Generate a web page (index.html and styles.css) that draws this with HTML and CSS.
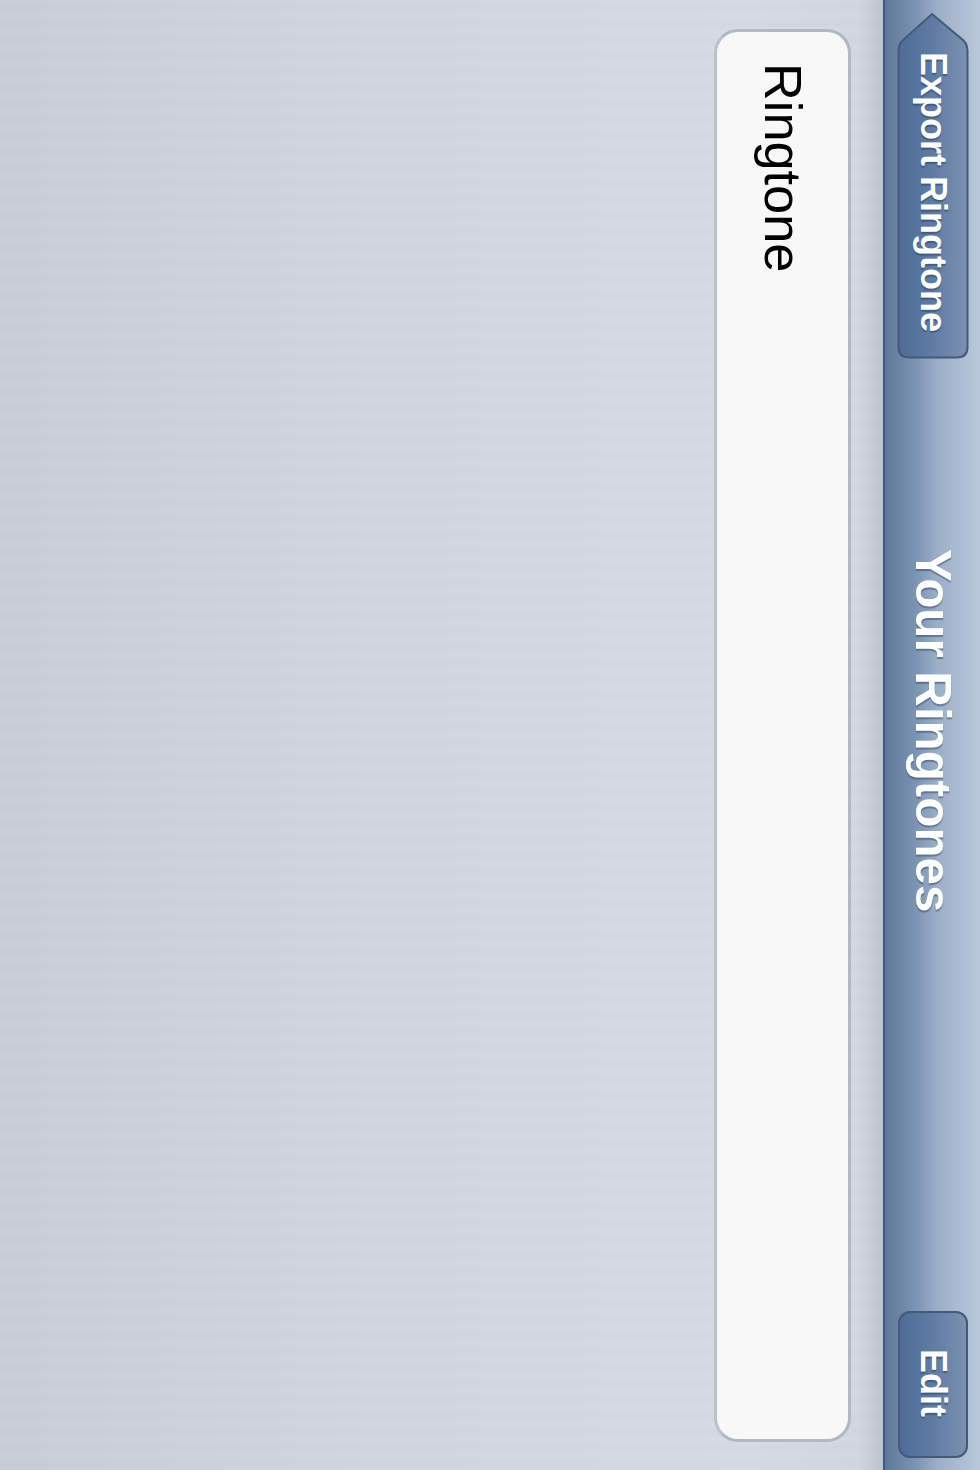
FILE: index.html
```html
<!DOCTYPE html>
<html lang="en">
  <head>
    <meta charset="UTF-8" />
    <title>Your Ringtones</title>
    <link rel="stylesheet" href="styles.css">
  </head>
  <body>
    <div class="content">
      <div class="card">
        <div class="cardLabel">Ringtone</div>
      </div>
    </div>
    <div class="navBar">
      <a class="navBtn backBtn">
        <svg class="backShape" width="72" height="347" viewBox="0 0 72 347">
          <defs>
            <linearGradient id="backFill" x1="0" y1="0" x2="1" y2="0">
              <stop offset="0" stop-color="#4c6b96" />
              <stop offset="0.5" stop-color="#607ca3" />
              <stop offset="1" stop-color="#7a92b2" />
            </linearGradient>
          </defs>
          <path d="M1.5 39 Q1.5 32 6 28 L35 2 L66 28 Q70.5 32 70.5 39 V335 Q70.5 345.5 60 345.5 H12 Q1.5 345.5 1.5 335 Z" fill="url(#backFill)" stroke="#435a78" stroke-width="2" />
        </svg>
        <span class="btnText">Export Ringtone</span>
      </a>
      <div class="navTitle">Your Ringtones</div>
      <a class="navBtn editBtn"><span class="btnText">Edit</span></a>
    </div>
  </body>
</html>
```

FILE: styles.css
```css
html,
body {
  margin: 0;
  padding: 0;
}
body {
  width: 980px;
  height: 1470px;
  display: flex;
  overflow: hidden;
  font-family: "Liberation Sans", Arial, sans-serif;
}
.content {
  width: 883px;
  height: 1470px;
  box-sizing: border-box;
  padding: 29px 32px 28px 714px;
  background:
    repeating-linear-gradient(180deg, rgba(255, 255, 255, 0.025) 0, rgba(120, 130, 160, 0.035) 8px, rgba(255, 255, 255, 0.025) 16px),
    linear-gradient(90deg, #c8cdd6 0, #d1d6e0 40%, #d6dbe5 85%, #d3d7e1 97%, #bfc4cc 100%);
}
.card {
  width: 137px;
  height: 100%;
  box-sizing: border-box;
  background: #f8f8f8;
  border: 3px solid #b2b8bf;
  border-left-color: #bcc2ca;
  border-radius: 24px;
  padding-top: 31px;
  display: flex;
  justify-content: center;
  align-items: flex-start;
}
.cardLabel {
  font-size: 52.3px;
  line-height: 60px;
  color: #000;
  writing-mode: vertical-rl;
}
.navBar {
  width: 97px;
  height: 1470px;
  box-sizing: border-box;
  padding: 12px 12px 12px 13px;
  border-left: 2px solid #3f5a80;
  display: flex;
  flex-direction: column;
  justify-content: space-between;
  align-items: center;
  background: linear-gradient(90deg, #5c7799 0, #7f97b5 35%, #9bafc7 55%, #b9c8da 100%);
}
.navBtn {
  display: flex;
  justify-content: center;
  position: relative;
  width: 70px;
  box-sizing: border-box;
  color: #fff;
  font-weight: bold;
  font-size: 36px;
}
.btnText {
  position: relative;
  writing-mode: vertical-rl;
  line-height: 44px;
  text-shadow: 2px 0 1px rgba(40, 60, 90, 0.5);
}
.backBtn {
  height: 347px;
  padding-top: 40px;
}
.backShape {
  position: absolute;
  top: 0;
  left: -1px;
}
.editBtn {
  height: 147px;
  padding-top: 36px;
  border: 2px solid #435a78;
  border-radius: 12px;
  background: linear-gradient(90deg, #4c6b96 0, #607ca3 50%, #7a92b2 100%);
}
.navTitle {
  writing-mode: vertical-rl;
  font-size: 49.3px;
  font-weight: bold;
  line-height: 56px;
  color: #fff;
  text-shadow: 2px 0 1px rgba(50, 70, 100, 0.5);
  margin-bottom: 208px;
}
```
